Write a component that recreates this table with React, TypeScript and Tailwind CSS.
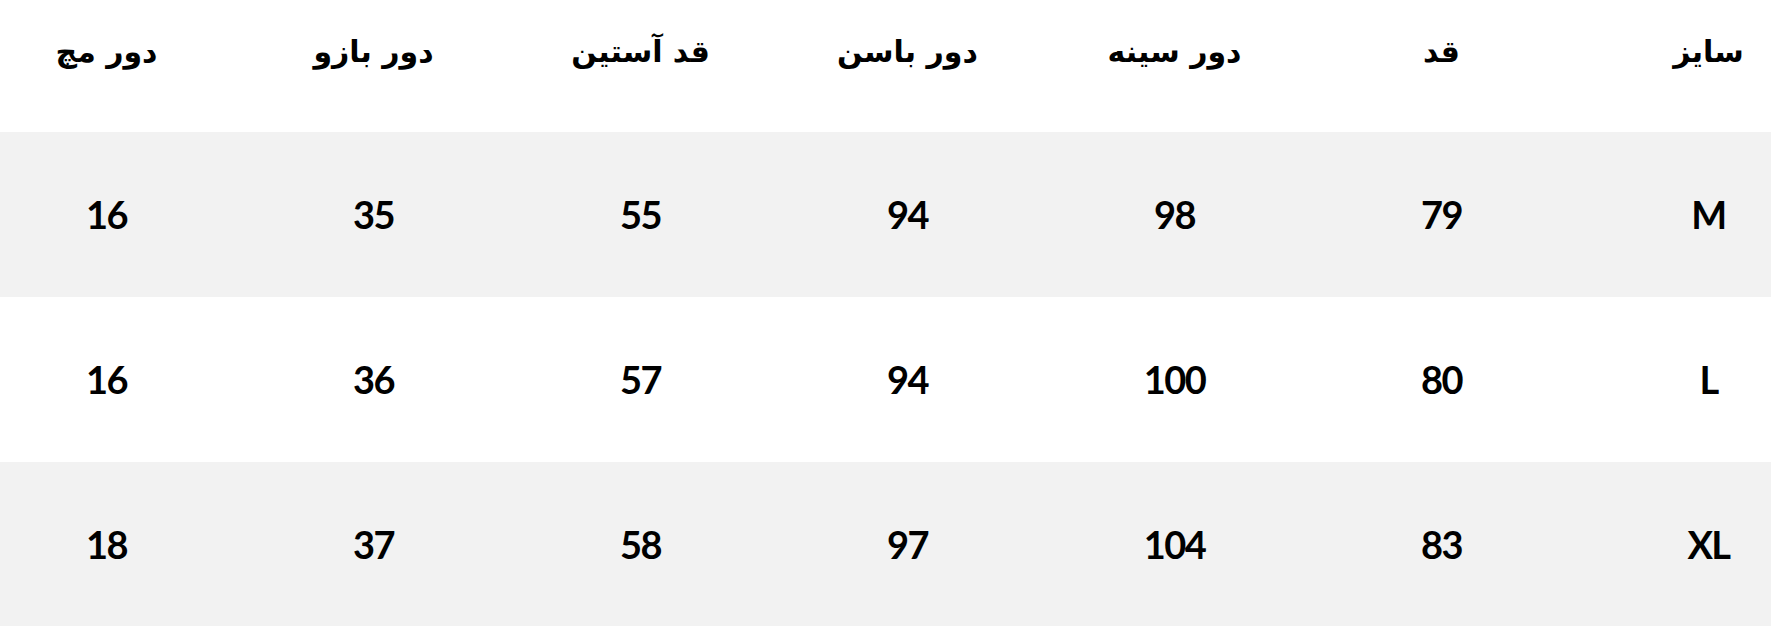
import React from "react";

const headers = ["سایز", "قد", "دور سینه", "دور باسن", "قد آستین", "دور بازو", "دور مچ"];

const rows = [
  ["M", "79", "98", "94", "55", "35", "16"],
  ["L", "80", "100", "94", "57", "36", "16"],
  ["XL", "83", "104", "97", "58", "37", "18"],
];

const App: React.FC = () => {
  return (
    <div className="w-[1771px] h-[626px] overflow-hidden bg-white text-black">
      <div dir="rtl" className="w-[1869px] ml-[-27px]">
        <div className="grid grid-cols-[repeat(7,267px)] h-[132px] items-center pb-[30px] font-['DejaVu_Sans',sans-serif] font-bold text-[30px]">
          {headers.map((h) => (
            <div key={h} className="text-center">{h}</div>
          ))}
        </div>
        {rows.map((r, i) => (
          <div
            key={r[0]}
            className={`grid grid-cols-[repeat(7,267px)] h-[165px] items-center font-['Lato',sans-serif] font-bold text-[38px] tracking-[-1.5px] ${i % 2 === 0 ? "bg-[#f2f2f2]" : "bg-white"}`}
          >
            {r.map((c, j) => (
              <div key={j} className="text-center">{c}</div>
            ))}
          </div>
        ))}
      </div>
    </div>
  );
};

export default App;
